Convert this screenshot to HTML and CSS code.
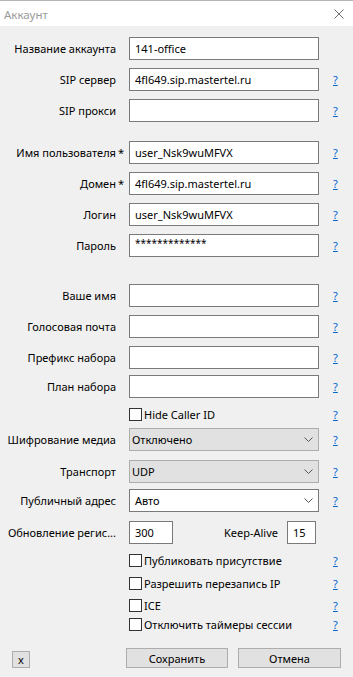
FILE: index.html
```html
<!DOCTYPE html>
<html lang="ru">
<head>
  <meta charset="UTF-8" />
  <meta name="viewport" content="width=device-width, initial-scale=1.0" />
  <title>Аккаунт</title>
  <link rel="stylesheet" href="styles.css">
</head>
<body>
  <div class="window">
    <div class="titlebar">
      <span class="title">Аккаунт</span>
      <svg class="close" width="10" height="10" viewBox="0 0 10 10">
        <path d="M0.5 0.5L9.5 9.5M9.5 0.5L0.5 9.5" stroke="#6d6d6d" stroke-width="1" fill="none" />
      </svg>
    </div>

    <div class="content">
      <div class="row">
        <label class="lbl">Название аккаунта</label>
        <input class="field" type="text" value="141-office" />
        <span></span>
      </div>
      <div class="row mt-8">
        <label class="lbl">SIP сервер</label>
        <input class="field" type="text" value="4fl649.sip.mastertel.ru" />
        <a class="help" href="#">?</a>
      </div>
      <div class="row mt-8">
        <label class="lbl">SIP прокси</label>
        <input class="field" type="text" value="" />
        <a class="help" href="#">?</a>
      </div>

      <div class="row mt-19">
        <label class="lbl">Имя пользователя<span class="req">*</span></label>
        <input class="field" type="text" value="user_Nsk9wuMFVX" />
        <a class="help" href="#">?</a>
      </div>
      <div class="row mt-8">
        <label class="lbl">Домен<span class="req">*</span></label>
        <input class="field" type="text" value="4fl649.sip.mastertel.ru" />
        <a class="help" href="#">?</a>
      </div>
      <div class="row mt-8">
        <label class="lbl">Логин</label>
        <input class="field" type="text" value="user_Nsk9wuMFVX" />
        <a class="help" href="#">?</a>
      </div>
      <div class="row mt-8">
        <label class="lbl">Пароль</label>
        <input class="field pass" type="text" value="*************" />
        <a class="help" href="#">?</a>
      </div>

      <div class="row mt-27">
        <label class="lbl">Ваше имя</label>
        <input class="field" type="text" value="" />
        <a class="help" href="#">?</a>
      </div>
      <div class="row mt-8">
        <label class="lbl">Голосовая почта</label>
        <input class="field" type="text" value="" />
        <a class="help" href="#">?</a>
      </div>
      <div class="row mt-8">
        <label class="lbl">Префикс набора</label>
        <input class="field" type="text" value="" />
        <a class="help" href="#">?</a>
      </div>
      <div class="row mt-6">
        <label class="lbl">План набора</label>
        <input class="field" type="text" value="" />
        <a class="help" href="#">?</a>
      </div>

      <div class="row check-row mt-9">
        <span></span>
        <label class="check"><span class="box"></span>Hide Caller ID</label>
        <a class="help" href="#">?</a>
      </div>

      <div class="row mt-8">
        <label class="lbl">Шифрование медиа</label>
        <div class="combo">
          <span>Отключено</span>
          <svg width="9" height="5" viewBox="0 0 9 5"><path d="M0.5 0.5L4.5 4.5L8.5 0.5" stroke="#555" fill="none" /></svg>
        </div>
        <a class="help" href="#">?</a>
      </div>
      <div class="row mt-9">
        <label class="lbl">Транспорт</label>
        <div class="combo">
          <span>UDP</span>
          <svg width="9" height="5" viewBox="0 0 9 5"><path d="M0.5 0.5L4.5 4.5L8.5 0.5" stroke="#555" fill="none" /></svg>
        </div>
        <a class="help" href="#">?</a>
      </div>
      <div class="row mt-6">
        <label class="lbl">Публичный адрес</label>
        <div class="combo editable">
          <span>Авто</span>
          <svg width="9" height="5" viewBox="0 0 9 5"><path d="M0.5 0.5L4.5 4.5L8.5 0.5" stroke="#555" fill="none" /></svg>
        </div>
        <a class="help" href="#">?</a>
      </div>

      <div class="row mt-9">
        <label class="lbl">Обновление регис...</label>
        <div class="pair">
          <input class="field small" type="text" value="300" />
          <label class="keep">Keep-Alive</label>
          <input class="field tiny" type="text" value="15" />
        </div>
        <span></span>
      </div>

      <div class="row check-row mt-9">
        <span></span>
        <label class="check"><span class="box"></span>Публиковать присутствие</label>
        <a class="help" href="#">?</a>
      </div>
      <div class="row check-row mt-10">
        <span></span>
        <label class="check"><span class="box"></span>Разрешить перезапись IP</label>
        <a class="help" href="#">?</a>
      </div>
      <div class="row check-row mt-9">
        <span></span>
        <label class="check"><span class="box"></span>ICE</label>
        <a class="help" href="#">?</a>
      </div>
      <div class="row check-row mt-6">
        <span></span>
        <label class="check"><span class="box"></span>Отключить таймеры сессии</label>
        <a class="help" href="#">?</a>
      </div>

      <div class="buttons">
        <button class="btn btn-x">x</button>
        <button class="btn btn-save">Сохранить</button>
        <button class="btn btn-cancel">Отмена</button>
      </div>
    </div>
  </div>
</body>
</html>
```

FILE: styles.css
```css
/* Окно */
body {
  margin: 0;
  background-color: #f0f0f0;
  font-family: "Noto Sans", "Open Sans", sans-serif;
  font-size: 11px;
  color: #000;
}

.window {
  width: 353px;
  height: 677px;
  background-color: #f0f0f0;
}

/* Заголовок */
.titlebar {
  height: 25px;
  border-top: 1px solid #b4b4b4;
  background-color: #fff;
  display: flex;
  align-items: center;
  justify-content: space-between;
  padding: 0 9px 0 4px;
}
.title {
  color: #9a9a9a;
  font-size: 11.5px;
  margin-top: 1px;
}
.close {
  display: block;
}

/* Содержимое */
.content {
  padding-top: 11px;
}

.row {
  display: grid;
  grid-template-columns: 116px 190px 1fr;
  column-gap: 13px;
  align-items: center;
  height: 23px;
}
.check-row {
  height: 13px;
}

.lbl {
  text-align: right;
  white-space: nowrap;
}
.req {
  margin-right: -8px;
  margin-left: 2px;
}

.field {
  box-sizing: border-box;
  width: 190px;
  height: 23px;
  margin: 0;
  padding: 0 5px;
  border: 1px solid #7a7a7a;
  background-color: #fff;
  font-family: inherit;
  font-size: 11px;
  color: #000;
  outline: none;
}
.pass {
  padding-bottom: 6px;
  font-size: 10px;
}

.help {
  color: #0066cc;
  font-size: 11px;
  padding-left: 1px;
  text-decoration: underline;
}

/* Флажки */
.check {
  display: flex;
  align-items: center;
  white-space: nowrap;
}
.box {
  box-sizing: border-box;
  width: 13px;
  height: 13px;
  border: 1px solid #333;
  background-color: #fff;
  margin-right: 2px;
}

/* Выпадающие списки */
.combo {
  box-sizing: border-box;
  height: 23px;
  border: 1px solid #adadad;
  background-color: #e1e1e1;
  display: flex;
  align-items: center;
  justify-content: space-between;
  padding: 0 5px 0 2px;
}
.combo svg {
  display: block;
}
.combo.editable {
  background-color: #fff;
  border-color: #7a7a7a;
  padding-left: 5px;
}

/* Обновление регистрации */
.pair {
  display: flex;
  align-items: center;
}
.small {
  width: 44px;
}
.tiny {
  width: 29px;
  margin-right: 3px;
}
.keep {
  margin-left: auto;
  margin-right: 9px;
}

/* Кнопки */
.buttons {
  display: flex;
  align-items: flex-end;
  padding: 0 12px;
  margin-top: 18px;
}
.btn {
  box-sizing: border-box;
  border: 1px solid #adadad;
  background-color: #e1e1e1;
  font-family: inherit;
  font-size: 11px;
  color: #000;
  padding: 0;
}
.btn-x {
  width: 18px;
  height: 17px;
  line-height: 13px;
}
.btn-save {
  width: 102px;
  height: 20px;
  margin-left: auto;
}
.btn-cancel {
  width: 103px;
  height: 20px;
  margin-left: 10px;
}

/* Отступы */
.mt-6 { margin-top: 6px; }
.mt-8 { margin-top: 8px; }
.mt-9 { margin-top: 9px; }
.mt-10 { margin-top: 10px; }
.mt-19 { margin-top: 19px; }
.mt-27 { margin-top: 27px; }
```
